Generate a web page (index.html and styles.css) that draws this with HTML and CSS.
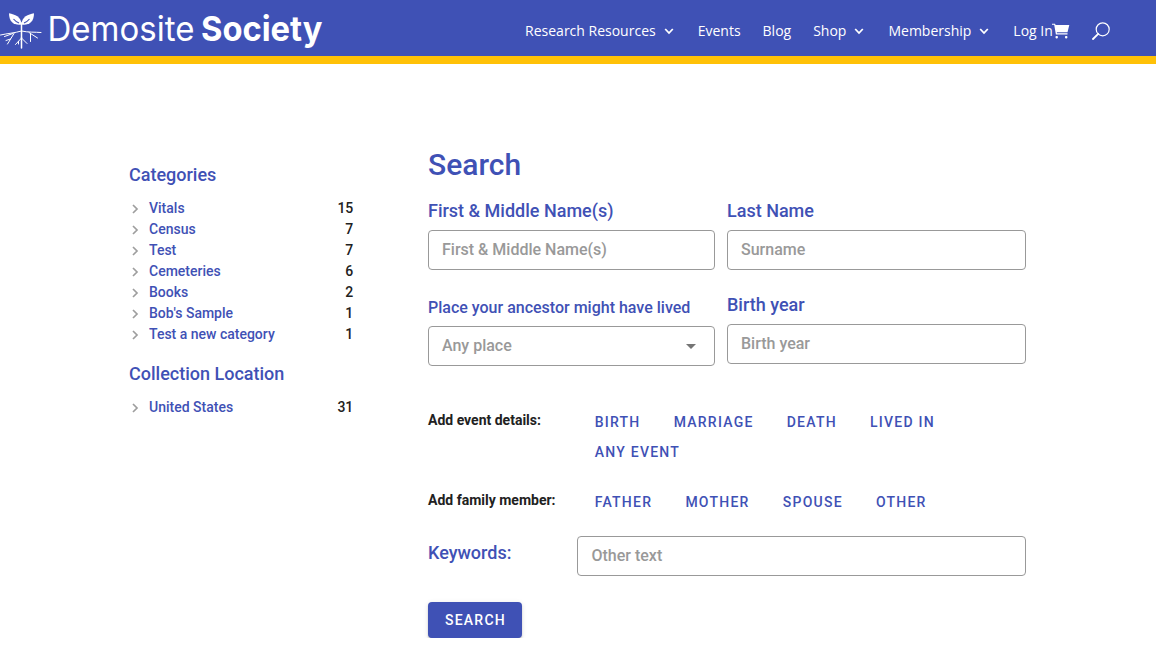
FILE: index.html
```html
<!DOCTYPE html>
<html lang="en">
<head>
<meta charset="utf-8">
<title>Demosite Society – Search</title>
<link rel="stylesheet" href="styles.css">
</head>
<body>
<header class="header">
  <a class="logo" aria-label="Demosite Society">
    <svg class="logo-art" width="330" height="56" viewBox="0 0 330 56">
      <g fill="#fff">
        <path d="M9 13.3 C15 14.5 21 16.5 21.6 24.5 C14.5 25.5 9 22.5 9 13.3Z"/>
        <path d="M34 13.3 C28 14.5 22 16.5 21.4 24.5 C28.5 25.5 34 22.5 34 13.3Z"/>
      </g>
      <g fill="none" stroke="#3f51b5" stroke-width="1.1">
        <path d="M13.500 19 Q15.500 21.500 19 23M29.500 19 Q27.500 21.500 24 23"/>
      </g>
      <g fill="none" stroke="#fff" stroke-width="1" stroke-linecap="round">
        <path d="M21.5 23V48" stroke-width="1.5"/>
        <path d="M21.5 31 C15 33 7 33.5 .5 35M21.5 31 C28 32.5 35 32 41 32.5M13 33.5L4.500 36.500M14 33.500L7.500 44M10.500 39L6 40.500M29 32.500L37.500 38M30.500 34V41.500M21.500 38L15.500 44.500M18.500 41.500V44M21.500 38L27 43.500"/>
      </g>
      <g class="wordmark">
        <text class="word-light" x="47.500" y="41" textLength="147" lengthAdjust="spacingAndGlyphs">Demosite</text>
        <text class="word-bold" x="201" y="41" textLength="121.500" lengthAdjust="spacingAndGlyphs">Society</text>
      </g>
    </svg>
  </a>
  <nav class="nav">
    <a class="nav-link">Research Resources<svg class="chevron" width="10" height="8" viewBox="0 0 10 8"><path d="M1.200 2L5 6L8.800 2"/></svg></a>
    <a class="nav-link">Events</a>
    <a class="nav-link">Blog</a>
    <a class="nav-link">Shop<svg class="chevron" width="10" height="8" viewBox="0 0 10 8"><path d="M1.200 2L5 6L8.800 2"/></svg></a>
    <a class="nav-link">Membership<svg class="chevron" width="10" height="8" viewBox="0 0 10 8"><path d="M1.200 2L5 6L8.800 2"/></svg></a>
    <a class="nav-link">Log In</a>
  </nav>
  <svg class="cart" width="18" height="17" viewBox="0 0 18 17" fill="#fff"><path d="M0 .7H3L3.600 2H17.300L15.500 9.300H4.800L5 10.300H15.500V11.500H3.900L2.200 1.800H0Z"/><rect x="3.500" y="13" width="2.400" height="2.400" rx=".8"/><rect x="13" y="13" width="2.400" height="2.400" rx=".8"/></svg>
  <svg class="magnifier" width="18" height="18" viewBox="0 0 18 18" fill="none" stroke="#fff"><circle cx="10.700" cy="7.300" r="6.500" stroke-width="1.200"/><path d="M6.200 11.800L1 17" stroke-width="1.800" stroke-linecap="round"/></svg>
</header>
<main class="main">
  <aside class="sidebar">
    <h2 class="facet-title">Categories</h2>
    <ul class="facet-list">
      <li class="facet"><svg class="caret" width="12" height="12" viewBox="0 0 12 12"><path d="M4 2L8 6L4 10"/></svg><a class="facet-name">Vitals</a><span>15</span></li>
      <li class="facet"><svg class="caret" width="12" height="12" viewBox="0 0 12 12"><path d="M4 2L8 6L4 10"/></svg><a class="facet-name">Census</a><span>7</span></li>
      <li class="facet"><svg class="caret" width="12" height="12" viewBox="0 0 12 12"><path d="M4 2L8 6L4 10"/></svg><a class="facet-name">Test</a><span>7</span></li>
      <li class="facet"><svg class="caret" width="12" height="12" viewBox="0 0 12 12"><path d="M4 2L8 6L4 10"/></svg><a class="facet-name">Cemeteries</a><span>6</span></li>
      <li class="facet"><svg class="caret" width="12" height="12" viewBox="0 0 12 12"><path d="M4 2L8 6L4 10"/></svg><a class="facet-name">Books</a><span>2</span></li>
      <li class="facet"><svg class="caret" width="12" height="12" viewBox="0 0 12 12"><path d="M4 2L8 6L4 10"/></svg><a class="facet-name">Bob's Sample</a><span>1</span></li>
      <li class="facet"><svg class="caret" width="12" height="12" viewBox="0 0 12 12"><path d="M4 2L8 6L4 10"/></svg><a class="facet-name">Test a new category</a><span>1</span></li>
    </ul>
    <h2 class="facet-title">Collection Location</h2>
    <ul class="facet-list">
      <li class="facet"><svg class="caret" width="12" height="12" viewBox="0 0 12 12"><path d="M4 2L8 6L4 10"/></svg><a class="facet-name">United States</a><span>31</span></li>
    </ul>
  </aside>
  <form class="form">
    <h1 class="title">Search</h1>
    <div class="fields">
      <div class="column">
        <label class="label" for="first">First &amp; Middle Name(s)</label>
        <input class="input" id="first" placeholder="First &amp; Middle Name(s)">
        <span class="label label-place">Place your ancestor might have lived</span>
        <div class="input select"><span>Any place</span><svg width="10" height="5" viewBox="0 0 10 5"><path d="M0 0H10L5 5Z" fill="#757575"/></svg></div>
      </div>
      <div class="column">
        <label class="label" for="last">Last Name</label>
        <input class="input" id="last" placeholder="Surname">
        <label class="label label-birth" for="birth">Birth year</label>
        <input class="input" id="birth" placeholder="Birth year">
      </div>
    </div>
    <div class="adder adder-events">
      <span class="adder-label">Add event details:</span>
      <div class="chips"><a class="chip">BIRTH</a><a class="chip">MARRIAGE</a><a class="chip">DEATH</a><a class="chip">LIVED IN</a><a class="chip">ANY EVENT</a></div>
    </div>
    <div class="adder adder-family">
      <span class="adder-label">Add family member:</span>
      <div class="chips"><a class="chip">FATHER</a><a class="chip">MOTHER</a><a class="chip">SPOUSE</a><a class="chip">OTHER</a></div>
    </div>
    <div class="keywords">
      <label class="label" for="keywords">Keywords:</label>
      <input class="input" id="keywords" placeholder="Other text">
    </div>
    <button class="submit" type="button">SEARCH</button>
  </form>
</main>
</body>
</html>
```
FILE: styles.css
```css
* { box-sizing: border-box; }
body { margin: 0; background: #fff; color: #212121; font-family: Roboto, sans-serif; font-weight: 500; overflow: hidden; }
.header { display: flex; align-items: center; height: 64px; background: #3f51b5; border-bottom: 8px solid #ffc107; padding-right: 46.200px; }
.logo, .logo-art { display: block; }
.logo { margin-right: auto; }
.wordmark { fill: #fff; font-family: Inter, sans-serif; font-size: 34.500px; }
.word-light { font-weight: 400; }
.word-bold { font-weight: 700; }
.nav { display: flex; gap: 22px; padding-top: 6px; }
.nav-link { display: flex; align-items: center; color: #fff; font: 400 14px/20px "Open Sans", sans-serif; white-space: nowrap; }
.chevron { margin: 0 2px 0 8px; fill: none; stroke: #fff; stroke-width: 1.8; }
.cart { margin: 7px 1px 0 -1px; }
.magnifier { margin: 6px 0 0 21px; }
.main { display: flex; padding: 82px 130px 0 129px; }
.sidebar { width: 224.300px; margin-right: 74.700px; padding-top: 17px; }
.facet-title { margin: 0; color: #3f51b5; font-size: 18px; line-height: 24px; font-weight: 500; }
.facet-list { margin: 11px 0 17px; padding: 0; list-style: none; font-size: 14px; line-height: 21px; }
.facet { display: flex; align-items: center; }
.facet-name { flex: 1; color: #3f51b5; }
.caret { margin: 0 8px 0 0; fill: none; stroke: #9e9e9e; stroke-width: 1.7; }
.form { width: 598px; }
.title { margin: 0; color: #3f51b5; font-size: 30px; line-height: 38px; font-weight: 500; }
.fields { display: grid; grid-template-columns: 287px 299px; gap: 12px; padding-top: 15px; }
.column { display: flex; flex-direction: column; }
.label { color: #3f51b5; font-size: 18px; line-height: 24px; }
.label-place { font-size: 16px; margin-top: 26px; }
.label-birth { margin-top: 23px; }
.input { width: 100%; height: 40px; margin-top: 7px; padding: 0 13px 2px; border: 1px solid #999; border-radius: 4px; background: #fff; color: #999; font: 500 16px/36px Roboto, sans-serif; }
.input::placeholder { color: #999; opacity: 1; }
.label-place + .input { margin-top: 6px; }
.select { display: flex; align-items: center; justify-content: space-between; padding-right: 18px; padding-bottom: 0; }
.adder { display: flex; }
.adder-events { margin-top: 41px; }
.adder-family { margin-top: 20px; }
.adder-label { width: 166.700px; padding-top: 3px; font-size: 14px; line-height: 20px; font-weight: 700; }
.chips { flex: 1; display: flex; flex-wrap: wrap; column-gap: 33.100px; }
.chip { color: #3f51b5; font-size: 14px; line-height: 30px; letter-spacing: 1.250px; }
.keywords { display: grid; grid-template-columns: 149px 1fr; margin-top: 19px; }
.keywords .label { padding-top: 5px; }
.keywords .input { margin: 0; padding-left: 13.500px; }
.submit { display: block; width: 94px; height: 36px; margin-top: 26px; padding: 0 0 0 1px; border: 0; border-radius: 4px; background: #3f51b5; color: #fff; font: 500 14px/36px Roboto, sans-serif; letter-spacing: 1.250px; box-shadow: 0 3px 1px -2px rgba(0,0,0,.2), 0 2px 2px rgba(0,0,0,.14), 0 1px 5px rgba(0,0,0,.12); }
```
